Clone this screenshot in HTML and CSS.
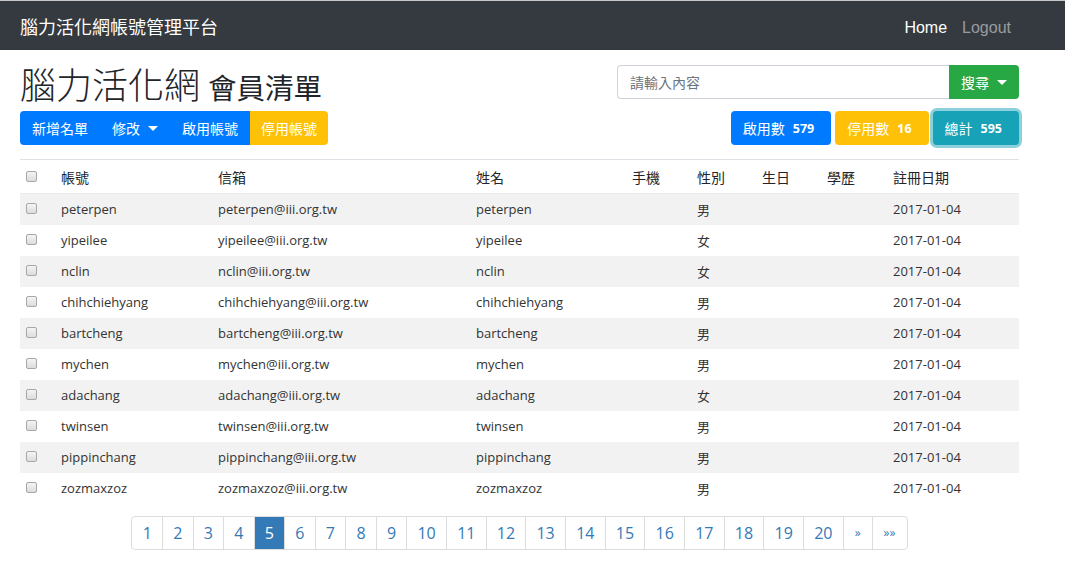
FILE: index.html
```html
<!DOCTYPE html>
<html lang="zh-Hant">
<head>
<meta charset="utf-8">
<title>腦力活化網帳號管理平台</title>
<link rel="stylesheet" href="styles.css">
</head>
<body>
<nav class="navbar">
  <div class="brand">腦力活化網帳號管理平台</div>
  <div class="nav-links">
    <a class="nav-link active">Home</a>
    <a class="nav-link">Logout</a>
  </div>
</nav>
<main class="main">
  <div class="head-row">
    <h1 class="title">腦力活化網 <small class="sub">會員清單</small></h1>
    <div class="search">
      <input class="search-input" type="text" placeholder="請輸入內容">
      <button class="btn btn-green">搜尋 <span class="caret"></span></button>
    </div>
  </div>
  <div class="tool-row">
    <div class="btn-group">
      <button class="btn btn-blue">新增名單</button>
      <button class="btn btn-blue">修改 <span class="caret"></span></button>
      <button class="btn btn-blue">啟用帳號</button>
      <button class="btn btn-yellow">停用帳號</button>
    </div>
    <div class="stats">
      <button class="btn btn-blue stat">啟用數 <span class="badge">579</span></button>
      <button class="btn btn-yellow stat">停用數 <span class="badge">16</span></button>
      <button class="btn btn-teal stat focus">總計 <span class="badge">595</span></button>
    </div>
  </div>
  <table class="table">
    <colgroup>
      <col class="c1"><col class="c2"><col class="c3"><col class="c4"><col class="c5"><col class="c6"><col class="c7"><col class="c8"><col class="c9">
    </colgroup>
    <thead>
      <tr><th><span class="cb"></span></th><th>帳號</th><th>信箱</th><th>姓名</th><th>手機</th><th>性別</th><th>生日</th><th>學歷</th><th>註冊日期</th></tr>
    </thead>
    <tbody>
      <tr><td><span class="cb"></span></td><td>peterpen</td><td>peterpen@iii.org.tw</td><td>peterpen</td><td></td><td>男</td><td></td><td></td><td>2017-01-04</td></tr>
      <tr><td><span class="cb"></span></td><td>yipeilee</td><td>yipeilee@iii.org.tw</td><td>yipeilee</td><td></td><td>女</td><td></td><td></td><td>2017-01-04</td></tr>
      <tr><td><span class="cb"></span></td><td>nclin</td><td>nclin@iii.org.tw</td><td>nclin</td><td></td><td>女</td><td></td><td></td><td>2017-01-04</td></tr>
      <tr><td><span class="cb"></span></td><td>chihchiehyang</td><td>chihchiehyang@iii.org.tw</td><td>chihchiehyang</td><td></td><td>男</td><td></td><td></td><td>2017-01-04</td></tr>
      <tr><td><span class="cb"></span></td><td>bartcheng</td><td>bartcheng@iii.org.tw</td><td>bartcheng</td><td></td><td>男</td><td></td><td></td><td>2017-01-04</td></tr>
      <tr><td><span class="cb"></span></td><td>mychen</td><td>mychen@iii.org.tw</td><td>mychen</td><td></td><td>男</td><td></td><td></td><td>2017-01-04</td></tr>
      <tr><td><span class="cb"></span></td><td>adachang</td><td>adachang@iii.org.tw</td><td>adachang</td><td></td><td>女</td><td></td><td></td><td>2017-01-04</td></tr>
      <tr><td><span class="cb"></span></td><td>twinsen</td><td>twinsen@iii.org.tw</td><td>twinsen</td><td></td><td>男</td><td></td><td></td><td>2017-01-04</td></tr>
      <tr><td><span class="cb"></span></td><td>pippinchang</td><td>pippinchang@iii.org.tw</td><td>pippinchang</td><td></td><td>男</td><td></td><td></td><td>2017-01-04</td></tr>
      <tr><td><span class="cb"></span></td><td>zozmaxzoz</td><td>zozmaxzoz@iii.org.tw</td><td>zozmaxzoz</td><td></td><td>男</td><td></td><td></td><td>2017-01-04</td></tr>
    </tbody>
  </table>
  <div class="pager-wrap">
    <ul class="pagination">
      <li>1</li><li>2</li><li>3</li><li>4</li><li class="active">5</li><li>6</li><li>7</li><li>8</li><li>9</li><li>10</li><li>11</li><li>12</li><li>13</li><li>14</li><li>15</li><li>16</li><li>17</li><li>18</li><li>19</li><li>20</li><li class="arrow">»</li><li class="arrow">»»</li>
    </ul>
  </div>
</main>
</body>
</html>
```
FILE: styles.css
```css
* { box-sizing: border-box; }
html, body { margin: 0; padding: 0; }
body {
  background: #fff;
  color: #212529;
  font-family: "Open Sans", "Noto Sans CJK TC", sans-serif;
  font-size: 14px;
  border-top: 1px solid #c8c8c8;
}
.navbar {
  height: 49px;
  background: #343a40;
  display: flex;
  align-items: center;
  justify-content: space-between;
  padding: 0 54px 0 20px;
}
.brand {
  color: #fff;
  font-size: 18px;
  font-family: "Noto Sans CJK TC", sans-serif;
  margin-top: 1px;
}
.nav-links { display: flex; gap: 15px; margin-top: 4px; }
.nav-link { font-size: 16px; color: rgba(255,255,255,.5); font-family: "Liberation Sans", Arial, sans-serif; }
.nav-link.active { color: #fff; }

.main { width: 999px; margin-left: 20px; }

.head-row {
  display: flex;
  justify-content: space-between;
  align-items: flex-start;
  height: 61px;
  padding-top: 15px;
}
.title {
  margin: 0;
  font-weight: 300;
  font-size: 36px;
  line-height: 40px;
  color: #212529;
  font-family: "Noto Sans CJK TC", sans-serif;
  margin-top: -2px;
}
.sub { font-size: 28.5px; font-weight: 400; color: #212529; }
.search { display: flex; height: 34px; }
.search-input {
  width: 332px;
  height: 34px;
  border: 1px solid #ced4da;
  border-right: 0;
  border-radius: 4px 0 0 4px;
  padding: 0 12px;
  font-size: 14px;
  font-family: "Noto Sans CJK TC", sans-serif;
  color: #495057;
  outline: none;
}
.search-input::placeholder { color: #6c757d; }

.btn {
  border: 0;
  height: 34px;
  padding: 0 12px;
  font-size: 14px;
  font-family: "Noto Sans CJK TC", sans-serif;
  color: #fff;
  display: inline-flex;
  align-items: center;
  gap: 6px;
  cursor: pointer;
}
.btn-green { background: #28a745; border-radius: 0 4px 4px 0; padding: 0 12px; }
.btn-blue { background: #007bff; }
.btn-yellow { background: #ffc107; color: #fff; }
.btn-teal { background: #17a2b8; }
.caret {
  display: inline-block;
  width: 0; height: 0;
  border-left: 5px solid transparent;
  border-right: 5px solid transparent;
  border-top: 5px solid #fff;
  margin-left: 2px;
}
.tool-row {
  display: flex;
  justify-content: space-between;
  height: 48px;
  padding-top: 0;
}
.btn-group { display: flex; height: 34px; }
.btn-group .btn:first-child { border-radius: 4px 0 0 4px; }
.btn-group .btn:last-child { border-radius: 0 4px 4px 0; }
.btn-group .btn-blue + .btn-yellow { padding: 0 11px; }
.stats { display: flex; gap: 4px; height: 34px; }
.stat { border-radius: 4px; gap: 3px; padding: 0 12px; }
.badge {
  font-family: "Open Sans", sans-serif;
  font-weight: 700;
  font-size: 12.5px;
  padding: 0 5px;
}
.focus { box-shadow: 0 0 0 3px rgba(23,162,184,.5); }

.table {
  width: 999px;
  border-collapse: collapse;
  table-layout: fixed;
  border-top: 1px solid #dee2e6;
}
.c1 { width: 35px; } .c2 { width: 157px; } .c3 { width: 258px; } .c4 { width: 156px; }
.c5 { width: 65px; } .c6 { width: 65px; } .c7 { width: 65px; } .c8 { width: 66px; } .c9 { width: 132px; }
.table th, .table td {
  text-align: left;
  padding: 0 6px;
  white-space: nowrap;
  font-size: 14px;
  color: #333;
}
.table th {
  height: 34px;
  font-weight: 400;
  font-family: "Noto Sans CJK TC", sans-serif;
  color: #212529;
  border-bottom: 1px solid #e9ecef;
}
.table td {
  height: 31px;
  font-family: "Open Sans", "Noto Sans CJK TC", sans-serif;
  font-size: 13px;
  color: #333;
}
.table tbody tr:nth-child(odd) { background: #f2f2f2; }
.cb {
  display: inline-block;
  width: 11px; height: 11px;
  border: 1px solid #a8a8a8;
  border-radius: 2px;
  background: linear-gradient(#f4f4f4, #dcdcdc);
  vertical-align: middle;
  margin-top: -4px;
}
.pager-wrap { display: flex; justify-content: center; padding-top: 12px; }
.pagination {
  list-style: none;
  margin: 0; padding: 0;
  display: flex;
  border: 1px solid #ddd;
  border-radius: 4px;
  overflow: hidden;
}
.pagination li {
  height: 32px;
  padding: 0 10.2px;
  display: flex;
  align-items: center;
  font-size: 16px;
  color: #337ab7;
  font-family: "Open Sans", sans-serif;
  border-left: 1px solid #ddd;
}
.pagination li:first-child { border-left: 0; }
.pagination li.active { background: #337ab7; color: #fff; }
.pagination li.arrow { font-size: 12px; padding: 0 11px; }
```
